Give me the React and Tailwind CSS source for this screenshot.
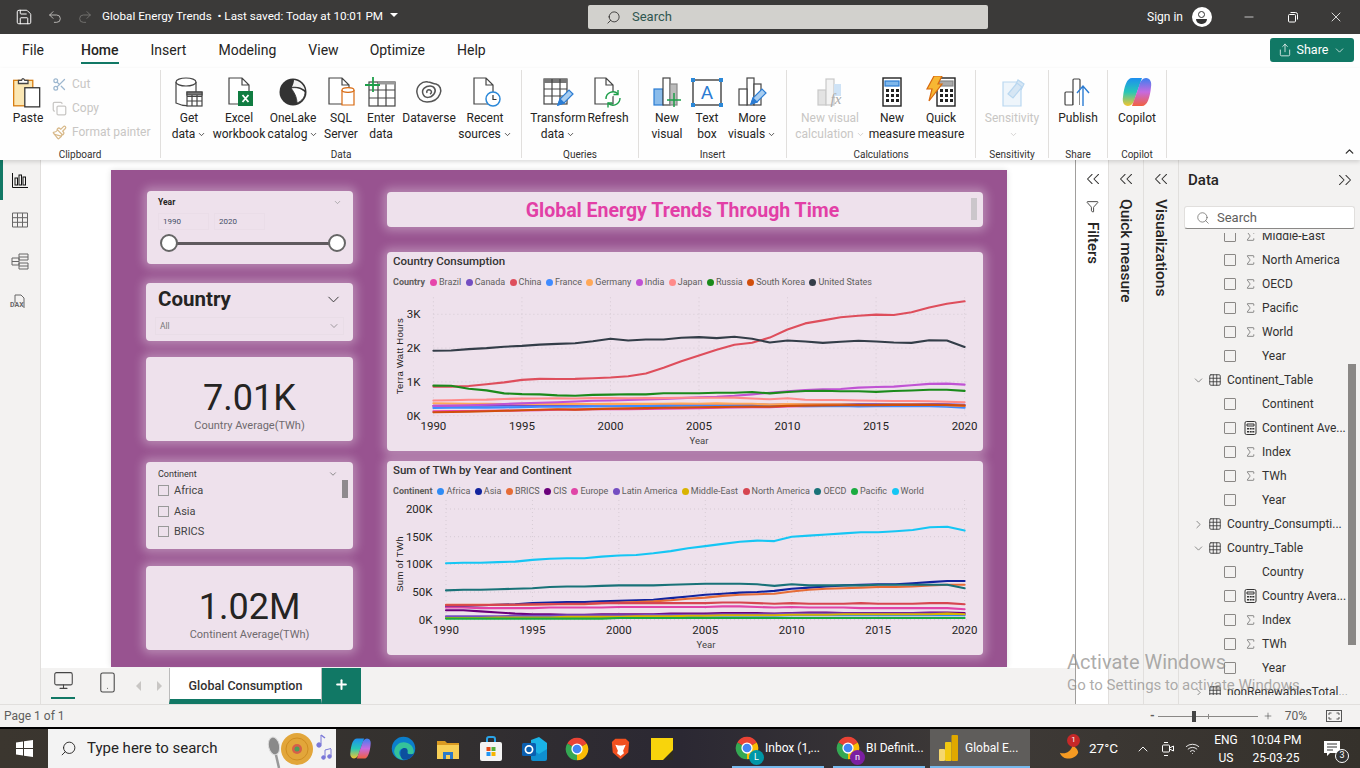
import {
  Save, Undo2, Redo2, Search, Minus, X, ChevronDown, ChevronUp, ChevronRight, ChevronsLeft, ChevronsRight,
  Scissors, Copy, Paintbrush, Funnel, Sigma, Grid3x3, Plus, Monitor, Smartphone, Share, Wifi,
} from 'lucide-react'

const YEARS = Array.from({ length: 31 }, (_, i) => 1990 + i)

const COUNTRY_SERIES = [
  { name: 'Brazil', color: '#e645ab', data: [130,135,140,145,150,155,165,175,180,190,195,195,200,210,215,225,235,245,255,255,275,285,290,300,305,300,295,295,300,300,295] },
  { name: 'Canada', color: '#744ec2', data: [290,295,295,300,305,310,315,320,320,325,335,330,335,340,345,345,340,345,340,325,335,340,340,345,345,345,345,345,345,340,320] },
  { name: 'China', color: '#de4e5c', data: [860,860,880,930,985,1060,1090,1085,1090,1110,1130,1170,1250,1420,1610,1780,1950,2100,2160,2310,2550,2730,2820,2910,2960,2990,2980,3060,3200,3310,3385] },
  { name: 'France', color: '#3f8bff', data: [230,240,245,240,245,255,265,265,270,275,280,285,285,290,295,295,295,290,290,285,295,280,285,290,275,280,280,280,280,270,240] },
  { name: 'Germany', color: '#ffa858', data: [370,360,355,350,345,350,355,350,350,345,350,355,350,355,360,355,365,355,355,330,345,335,335,340,325,325,330,330,325,310,290] },
  { name: 'India', color: '#c053d4', data: [290,300,310,325,345,365,385,400,420,440,450,465,480,495,520,540,560,590,630,680,720,760,780,790,830,850,860,900,940,950,920] },
  { name: 'Japan', color: '#ff8a8a', data: [450,460,470,475,495,505,510,515,510,520,525,515,520,520,530,530,530,535,510,485,515,470,465,465,450,440,435,435,425,415,395] },
  { name: 'Russia', color: '#1b8a1b', data: [890,885,800,750,660,640,630,600,590,615,625,635,630,665,665,665,680,680,700,660,700,730,740,725,725,705,730,745,770,770,735] },
  { name: 'South Korea', color: '#d14e0c', data: [100,110,120,130,145,160,175,190,180,195,210,215,225,235,240,250,255,265,270,270,290,300,305,310,315,315,320,320,320,320,300] },
  { name: 'United States', color: '#333d48', data: [1920,1930,1970,2000,2040,2065,2105,2125,2145,2205,2275,2225,2255,2255,2305,2325,2295,2335,2275,2165,2225,2195,2155,2185,2215,2195,2165,2155,2235,2225,2035] },
]

const CONTINENT_SERIES = [
  { name: 'Africa', color: '#2f8bf5', data: [4,4,4,4,4,5,5,5,5,5,5,6,6,6,6,7,7,7,7,7,8,8,8,8,8,8,8,8,8,8,8] },
  { name: 'Asia', color: '#12239e', data: [23,25,26,27,28,30,31,32,32,33,34,35,36,39,42,45,47,49,50,52,56,58,60,62,63,64,64,66,68,70,70] },
  { name: 'BRICS', color: '#e66c37', data: [27,27,27,27,27,27,28,28,28,30,31,32,33,35,38,40,43,45,46,47,51,54,56,57,58,59,59,60,62,63,63] },
  { name: 'CIS', color: '#6b007b', data: [17,17,15,13,11,10,10,9,9,10,10,10,10,11,11,11,12,12,12,11,12,13,13,12,12,12,12,12,13,13,12] },
  { name: 'Europe', color: '#e044a7', data: [22,22,21,21,21,21,22,22,22,22,23,23,23,23,23,23,24,24,23,22,23,22,22,22,21,21,21,21,21,21,19] },
  { name: 'Latin America', color: '#744ec2', data: [6,6,6,6,7,7,7,8,8,8,8,8,9,9,9,9,10,10,10,10,11,11,11,11,11,11,11,11,11,11,10] },
  { name: 'Middle-East', color: '#d9b300', data: [3,3,3,4,4,4,4,5,5,5,5,6,6,6,7,7,8,8,8,8,9,9,9,10,10,10,10,10,10,11,10] },
  { name: 'North America', color: '#d64550', data: [26,26,26,27,27,28,28,29,29,30,30,30,30,30,30,30,31,31,30,29,30,29,29,29,30,29,29,29,30,30,28] },
  { name: 'OECD', color: '#197278', data: [53,54,54,55,56,57,59,60,60,61,62,62,62,63,64,65,65,65,64,61,64,62,62,62,62,63,63,63,63,63,57] },
  { name: 'Pacific', color: '#1aab40', data: [2,2,2,2,2,2,2,2,2,2,3,3,3,3,3,3,3,3,3,3,3,3,3,3,3,3,3,3,3,3,3] },
  { name: 'World', color: '#15c6f4', data: [102,103,103,104,105,108,110,111,111,114,116,117,120,124,129,133,137,141,143,142,150,152,154,156,158,158,160,162,167,168,161] },
]

const TREE = [
  { t: 'f', icon: 'sum', label: 'Middle-East' },
  { t: 'f', icon: 'sum', label: 'North America' },
  { t: 'f', icon: 'sum', label: 'OECD' },
  { t: 'f', icon: 'sum', label: 'Pacific' },
  { t: 'f', icon: 'sum', label: 'World' },
  { t: 'f', label: 'Year' },
  { t: 'h', open: true, label: 'Continent_Table' },
  { t: 'f', label: 'Continent' },
  { t: 'f', icon: 'calc', label: 'Continent Ave...' },
  { t: 'f', icon: 'sum', label: 'Index' },
  { t: 'f', icon: 'sum', label: 'TWh' },
  { t: 'f', label: 'Year' },
  { t: 'h', label: 'Country_Consumpti...' },
  { t: 'h', open: true, label: 'Country_Table' },
  { t: 'f', label: 'Country' },
  { t: 'f', icon: 'calc', label: 'Country Avera...' },
  { t: 'f', icon: 'sum', label: 'Index' },
  { t: 'f', icon: 'sum', label: 'TWh' },
  { t: 'f', label: 'Year' },
  { t: 'h', label: 'nonRenewablesTotal...' },
]

const Ic = ({ children, s = 32, vb = 32 }) => (
  <svg width={s} height={s} viewBox={`0 0 ${vb} ${vb}`} fill="none" strokeWidth="1.2" stroke="#444">{children}</svg>
)

const Doc = ({ x = 6, y = 2, w = 18, h = 26 }) => (
  <path d={`M${x} ${y}h${w - 7}l7 7v${h - 7}h${-w}z M${x + w - 7} ${y}v7h7`} fill="#fff" />
)

const PasteIcon = () => (
  <Ic s={34}>
    <rect x="2.5" y="5" width="18" height="24" fill="#fbe7b4" stroke="#d77c10" />
    <path d="M7 5h3q1-3 3 0h3v3H7z" fill="#fff" />
    <rect x="13" y="12" width="14" height="18" fill="#fff" stroke="#333" />
  </Ic>
)
const GetDataIcon = () => (
  <Ic>
    <path d="M3 6v21q9 4 14 2M23 6v11" fill="#fff" />
    <ellipse cx="13" cy="6" rx="10" ry="4" fill="#fff" />
    <rect x="14" y="16" width="15" height="14" fill="#fff" />
    <path d="M14 20.5h15M14 25h15M19 16v14M24 16v14" />
    <path d="M14 16h15v3H14z" fill="#777" />
  </Ic>
)
const ExcelIcon = () => (
  <Ic>
    <Doc x={6} y={2} w={20} h={26} />
    <rect x="15" y="15" width="15" height="15" fill="#107c41" stroke="none" />
    <path d="M19.5 19l6 7M25.5 19l-6 7" stroke="#fff" strokeWidth="1.8" />
  </Ic>
)
const OneLakeIcon = () => (
  <Ic>
    <circle cx="16" cy="16" r="13.5" fill="#333" stroke="none" />
    <path d="M17 4c6 1 10 5 11 10-4-3-9-4-13-3 1-2 2-5 2-7z" fill="#f3f3f3" stroke="none" />
    <path d="M14 12c5-1 10 0 14 4 0 5-3 9-8 11 0-6-3-11-6-15z" fill="#fff" stroke="#333" strokeWidth="0.8" />
  </Ic>
)
const SqlIcon = () => (
  <Ic>
    <Doc x={4} y={2} w={20} h={26} />
    <path d="M17 14v15h12V14" fill="#fff" stroke="#d8690f" />
    <ellipse cx="23" cy="14" rx="6" ry="2.3" fill="#fff" stroke="#d8690f" />
  </Ic>
)
const EnterIcon = () => (
  <Ic>
    <rect x="4" y="6" width="26" height="24" fill="#fff" />
    <path d="M4 14h26M4 22h26M13 6v24M21 6v24" />
    <rect x="13" y="5" width="17" height="3.5" fill="#999" stroke="none" />
    <path d="M0 9h15M8 1v15" stroke="#1e9e4a" strokeWidth="1.8" />
  </Ic>
)
const DataverseIcon = () => (
  <Ic>
    <path d="M4 17c-1-7 5-12 11-11 3 0 5 2 8 2 4 1 6 6 4 10-2 5-7 8-13 8-5 0-9-3-10-9z" strokeWidth="1.5" stroke="#555" />
    <path d="M10 18c-2-5 3-8 7-8s7 4 4 8-9 5-11 0z" strokeWidth="1.5" stroke="#555" />
    <path d="M14 17c-1-2 1-4 3-3s2 3 0 4" strokeWidth="1.5" stroke="#555" />
  </Ic>
)
const RecentIcon = () => (
  <Ic>
    <Doc x={5} y={2} w={19} h={26} />
    <circle cx="24" cy="23" r="7" fill="#fff" stroke="#2b88d8" strokeWidth="1.5" />
    <path d="M24 19v4.5h3.5" stroke="#333" />
  </Ic>
)
const Pencil = ({ x = 0, y = 0 }) => (
  <g transform={`translate(${x} ${y})`}>
    <path d="M1 16l2-6L12 1l4 4-9 9z" fill="#a8cdf0" stroke="#2b7cd3" />
    <path d="M1 16l2-6 4 4z" fill="#2b7cd3" stroke="#2b7cd3" />
  </g>
)
const TransformIcon = () => (
  <Ic>
    <rect x="2" y="3" width="23" height="25" fill="#fff" />
    <rect x="2" y="3" width="23" height="4" fill="#777" stroke="none" />
    <path d="M2 13h23M2 20h23M10 3v25M18 3v25" />
    <Pencil x={15} y={13} />
  </Ic>
)
const RefreshIcon = () => (
  <Ic>
    <Doc x={3} y={2} w={18} h={26} />
    <g stroke="#1e9e4a" strokeWidth="1.4">
      <path d="M14 23a7 7 0 0 1 12-5" fill="#fff" />
      <path d="M26 14v4.500h-4.500M28 22a7 7 0 0 1-12 5" />
      <path d="M16 31.500V27h4.500" />
    </g>
  </Ic>
)
const Bars = () => (
  <>
    <rect x="11" y="2" width="7" height="27" fill="#fff" />
    <rect x="18" y="8" width="7" height="21" fill="#fff" />
    <rect x="3" y="13" width="8" height="16" fill="#fff" />
  </>
)
const NewVisualIcon = () => (
  <Ic>
    <rect x="3" y="13" width="9" height="16" fill="#8bbcea" stroke="#2b7cd3" />
    <rect x="12" y="2" width="7" height="27" fill="#fff" />
    <rect x="19" y="8" width="7" height="21" fill="#bbb" stroke="#888" />
    <path d="M16 24h14M23 17v14" stroke="#1e9e4a" strokeWidth="1.5" />
  </Ic>
)
const TextBoxIcon = () => (
  <Ic>
    <rect x="2" y="4" width="28" height="25" fill="#fff" stroke="#222" />
    <text x="16" y="23" textAnchor="middle" fontSize="19" fill="#2b7cd3" stroke="none" fontFamily="Roboto, sans-serif">A</text>
    <g fill="#2b88d8" stroke="none">
      <rect x="0" y="2" width="4" height="4" />
      <rect x="28" y="2" width="4" height="4" />
      <rect x="0" y="27" width="4" height="4" />
      <rect x="28" y="27" width="4" height="4" />
    </g>
  </Ic>
)
const MoreVisualsIcon = () => (
  <Ic>
    <Bars />
    <Pencil x={14} y={12} />
  </Ic>
)
const VisualCalcIcon = () => (
  <Ic>
    <rect x="4" y="14" width="8" height="15" fill="#e3e3e3" stroke="#c8c8c8" />
    <rect x="12" y="3" width="8" height="26" fill="#f3f3f3" stroke="#c8c8c8" />
    <rect x="20" y="8" width="7" height="12" fill="#cfe3f6" stroke="none" />
    <text x="22" y="28" textAnchor="middle" fontSize="15" fontStyle="italic" fill="#aaa" stroke="none" fontFamily="'Liberation Serif', serif">fx</text>
  </Ic>
)
const CalcBody = ({ x, accent }) => (
  <>
    <rect x={x} y="2" width="18" height="28" fill="#fff" stroke="#222" strokeWidth="1.4" />
    <rect x={x + 2} y="5" width="14" height="5" fill={accent} stroke={accent === '#aaa' ? '#888' : '#2b7cd3'} />
    <g fill="#222" stroke="none">
      {[13, 18, 23].map((y) => [3, 8, 13].map((dx) => <rect key={y + '-' + dx} x={x + dx} y={y} width="3" height="3" />))}
    </g>
  </>
)
const MeasureIcon = () => <Ic><CalcBody x={7} accent="#7fb7ea" /></Ic>
const QuickMeasureIcon = () => (
  <Ic>
    <CalcBody x={12} accent="#aaa" />
    <path d="M9 0h8l-4 8h4L4 25l3-12H2z" fill="#f7b733" stroke="#d8690f" />
  </Ic>
)
const SensitivityIcon = () => (
  <Ic>
    <path d="M7 6h18v24H7z" fill="#eef5fb" stroke="#b9d7f0" />
    <path d="M12 18l9-11 5 4-9 11z M19 10l3-6 6 4-3 6" fill="#d6e6f4" stroke="#b9d7f0" />
  </Ic>
)
const PublishIcon = () => (
  <Ic>
    <rect x="3" y="16" width="8" height="13" rx="1" fill="#fff" />
    <path d="M11 29V4a1 1 0 0 1 1-1h5a1 1 0 0 1 1 1v25" fill="#fff" />
    <path d="M18 29V12h5v17z" fill="#fff" stroke="none" />
    <path d="M21 30V11M15 17l6-7 6 7" stroke="#2b7cd3" strokeWidth="1.4" />
  </Ic>
)

const CopilotIcon = ({ s = 32, id = 'cp' }) => (
  <svg width={s} height={s} viewBox="0 0 32 32">
    <defs>
      <linearGradient id={id + 'a'} x1="0" y1="0" x2="0" y2="1">
        <stop offset="0" stopColor="#1d8ef0" />
        <stop offset="0.5" stopColor="#27c7b8" />
        <stop offset="1" stopColor="#f5c52c" />
      </linearGradient>
      <linearGradient id={id + 'b'} x1="0" y1="0" x2="0" y2="1">
        <stop offset="0" stopColor="#3b7ff0" />
        <stop offset="0.5" stopColor="#c66ae0" />
        <stop offset="1" stopColor="#f2603f" />
      </linearGradient>
    </defs>
    <path d="M11 2h10l-7 20c-1 5-4 8-7 8-4 0-6-4-5-9C3 10 6 2 11 2z" fill={`url(#${id}a)`} />
    <path d="M21 30H11l7-20c1-5 4-8 7-8 4 0 6 4 5 9-1 11-4 19-9 19z" fill={`url(#${id}b)`} />
  </svg>
)

const ChromeIcon = ({ s = 22, badge, badgeColor }) => (
  <div className="relative" style={{ width: s, height: s }}>
    <svg width={s} height={s} viewBox="0 0 32 32">
      <path d="M16 16L3 8.500A15 15 0 0 1 29 8.500z" fill="#ea4335" />
      <path d="M16 16L3 8.500A15 15 0 0 0 16 31z" fill="#34a853" />
      <path d="M16 16L29 8.500A15 15 0 0 1 16 31z" fill="#fbbc05" />
      <circle cx="16" cy="16" r="7.500" fill="#fff" />
      <circle cx="16" cy="16" r="5.800" fill="#4285f4" />
    </svg>
    {badge && (
      <span className={`absolute -right-[5px] -bottom-[5px] flex h-[15px] w-[15px] items-center justify-center rounded-full text-[9px] leading-none text-white ${badgeColor}`}>
        {badge}
      </span>
    )}
  </div>
)

const PowerBiIcon = () => (
  <svg width="20" height="26" viewBox="0 0 20 26">
    <rect x="0" y="14" width="6" height="12" rx="1" fill="#f5d76e" />
    <rect x="6" y="7" width="6.500" height="19" rx="1" fill="#f2c811" />
    <rect x="12.500" y="0" width="6.500" height="26" rx="1" fill="#e0a800" />
  </svg>
)

const WinLogo = () => (
  <svg width="17" height="17" viewBox="0 0 17 17" fill="#fff">
    <path d="M0 2.400l7-1v6.700H0zM8 1.200L17 0v8.100H8zM0 9h7v6.600l-7-1zM8 9h9v8l-9-1.300z" />
  </svg>
)

const EdgeIcon = () => (
  <svg width="25" height="25" viewBox="0 0 32 32">
    <circle cx="16" cy="16" r="15" fill="#0b7ecb" />
    <path d="M4 20C5 10 14 6 21 9c6 2 9 8 8 13-2 2-6 2-8 0 1-4-2-7-6-6-5 1-6 7-2 11 1 1 2 2 3 3-7 0-11-4-12-10z" fill="#35c29a" />
    <path d="M12 22c0-6 5-8 8-6 2 2 1 4 1 6 2 2 6 2 8 0-2 6-8 9-13 8-3-1-4-4-4-8z" fill="#0c4f9e" />
  </svg>
)
const FolderIcon = () => (
  <svg width="24" height="22" viewBox="0 0 24 22">
    <path d="M1 3h8l2 2h12v3H1z" fill="#d99a22" />
    <rect x="1" y="7" width="22" height="14" fill="#f7cf56" />
    <path d="M7 21v-7h10v7h-3v-4h-4v4z" fill="#2b79c9" />
  </svg>
)
const StoreIcon = () => (
  <svg width="24" height="26" viewBox="0 0 24 26">
    <path d="M8 6V3a2 2 0 0 1 2-2h4a2 2 0 0 1 2 2v3" fill="none" stroke="#2aa4e8" strokeWidth="2" />
    <rect x="1" y="6" width="22" height="19" rx="2" fill="#f4f4f4" />
    <rect x="7.500" y="11" width="4" height="4" fill="#e64a19" />
    <rect x="12.500" y="11" width="4" height="4" fill="#55b03a" />
    <rect x="7.500" y="16" width="4" height="4" fill="#2196f3" />
    <rect x="12.500" y="16" width="4" height="4" fill="#f7b500" />
  </svg>
)
const OutlookIcon = () => (
  <svg width="25" height="24" viewBox="0 0 25 24">
    <path d="M9 3l8-3 8 6v15l-8 3-8-3z" fill="#1ab3e6" />
    <path d="M9 12l8 5 8-5v10a2 2 0 0 1-2 2H11a2 2 0 0 1-2-2z" fill="#0f8fd0" />
    <rect x="0" y="6" width="14" height="13" rx="1.500" fill="#0a5fb0" />
    <circle cx="7" cy="12.500" r="3.600" fill="none" stroke="#fff" strokeWidth="1.700" />
  </svg>
)
const BraveIcon = () => (
  <svg width="19" height="24" viewBox="0 0 22 26">
    <path d="M5 1h12l4 4-1 12-9 8-9-8L1 5z" fill="#f1501f" />
    <path d="M5 8l4 1h4l4-1-3 7 1 3-4 3-4-3 1-3z" fill="#fff" />
  </svg>
)
const StickyIcon = () => (
  <svg width="22" height="22" viewBox="0 0 22 22">
    <rect x="0" y="0" width="22" height="22" fill="#f8d40c" />
    <path d="M22 22V12L12 22z" fill="#2f2c20" />
  </svg>
)
const SearchBadge = () => (
  <svg width="66" height="38" viewBox="0 0 66 38" className="mr-[3px]">
    <ellipse cx="7" cy="16" rx="5.500" ry="9" fill="#8a8a8a" stroke="#ddd" transform="rotate(-12 7 16)" />
    <path d="M9 25l3 13" stroke="#999" strokeWidth="2.500" />
    <circle cx="30" cy="19" r="16" fill="#e2a63a" />
    <circle cx="30" cy="19" r="11" fill="none" stroke="#cf8d22" />
    <circle cx="30" cy="19" r="5" fill="#d5604a" />
    <circle cx="30" cy="19" r="2.500" fill="#4e9e5a" />
    <g fill="#7a78d8" stroke="#7a78d8">
      <path d="M54 5v9" fill="none" />
      <path d="M54 5l4 3" fill="none" strokeWidth="1.500" />
      <circle cx="52" cy="15" r="2.200" />
      <path d="M58 20v7M64 19v7M58 20l6-1.500" fill="none" />
      <circle cx="56.500" cy="27.500" r="1.800" />
      <circle cx="62.500" cy="26.500" r="1.800" />
    </g>
  </svg>
)

function RibbonBtn({ w, icon, lines, caret, disabled }) {
  return (
    <div className="flex shrink-0 flex-col items-center" style={{ width: w }}>
      <div className="flex h-[34px] items-center justify-center">{icon}</div>
      <div className={`mt-[1px] whitespace-nowrap text-center text-[12px] leading-4 ${disabled ? 'text-[#c8c6c4]' : 'text-[#252423]'}`}>
        {lines.map((l, i) => (
          <div key={i} className="flex h-4 items-center justify-center">
            {l}
            {caret && i === lines.length - 1 && <ChevronDown size={9} strokeWidth={2} className="ml-[2px]" />}
          </div>
        ))}
      </div>
    </div>
  )
}

function Group({ w, label, pl = 0, children }) {
  return (
    <div className="my-[2px] flex shrink-0 flex-col border-r border-[#e1dfdd]" style={{ width: w }}>
      <div className="flex h-[78px] shrink-0 pt-[5px]" style={{ paddingLeft: pl }}>{children}</div>
      <div className="h-[10px] text-center text-[10px] leading-[13px] text-[#323130]">{label}</div>
    </div>
  )
}

function Ribbon() {
  return (
    <div className="relative z-10 flex h-[92px] bg-[#fefefe] shadow-[0_2px_4px_rgba(0,0,0,0.14)]">
      <Group w={161} label="Clipboard" pl={5}>
        <RibbonBtn w={46} icon={<PasteIcon />} lines={['Paste']} />
        <div className="ml-[1px] flex flex-col gap-[8px] pt-[1px] text-[12px] leading-4 text-[#c8c6c4]">
          <div className="flex items-center gap-[5px]"><Scissors size={15} className="text-[#9db7cf]" /><span>Cut</span></div>
          <div className="flex items-center gap-[5px]"><Copy size={15} className="text-[#c8c6c4]" /><span>Copy</span></div>
          <div className="flex items-center gap-[5px]"><Paintbrush size={15} className="text-[#d8b98a]" /><span>Format painter</span></div>
        </div>
      </Group>
      <Group w={361} label="Data" pl={4}>
        <RibbonBtn w={48} icon={<GetDataIcon />} lines={['Get', 'data']} caret />
        <RibbonBtn w={52} icon={<ExcelIcon />} lines={['Excel', 'workbook']} />
        <RibbonBtn w={56} icon={<OneLakeIcon />} lines={['OneLake', 'catalog']} caret />
        <RibbonBtn w={40} icon={<SqlIcon />} lines={['SQL', 'Server']} />
        <RibbonBtn w={40} icon={<EnterIcon />} lines={['Enter', 'data']} />
        <RibbonBtn w={56} icon={<DataverseIcon />} lines={['Dataverse']} />
        <RibbonBtn w={56} icon={<RecentIcon />} lines={['Recent', 'sources']} caret />
      </Group>
      <Group w={117} label="Queries" pl={12}>
        <RibbonBtn w={48} icon={<TransformIcon />} lines={['Transform', 'data']} caret />
        <RibbonBtn w={52} icon={<RefreshIcon />} lines={['Refresh']} />
      </Group>
      <Group w={148} label="Insert" pl={8}>
        <RibbonBtn w={40} icon={<NewVisualIcon />} lines={['New', 'visual']} />
        <RibbonBtn w={40} icon={<TextBoxIcon />} lines={['Text', 'box']} />
        <RibbonBtn w={50} icon={<MoreVisualsIcon />} lines={['More', 'visuals']} caret />
      </Group>
      <Group w={189} label="Calculations" pl={9}>
        <RibbonBtn w={68} icon={<VisualCalcIcon />} lines={['New visual', 'calculation']} caret disabled />
        <RibbonBtn w={56} icon={<MeasureIcon />} lines={['New', 'measure']} />
        <RibbonBtn w={42} icon={<QuickMeasureIcon />} lines={['Quick', 'measure']} />
      </Group>
      <Group w={73} label="Sensitivity">
        <RibbonBtn w={72} icon={<SensitivityIcon />} lines={['Sensitivity', '']} caret disabled />
      </Group>
      <Group w={59} label="Share">
        <RibbonBtn w={58} icon={<PublishIcon />} lines={['Publish']} />
      </Group>
      <Group w={59} label="Copilot">
        <RibbonBtn w={58} icon={<CopilotIcon />} lines={['Copilot']} />
      </Group>
      <ChevronUp size={13} strokeWidth={2.5} className="absolute bottom-[2px] right-[4px] text-[#323130]" />
    </div>
  )
}

function LineChart({ height, series, xStart, zeroY, unit, ticks, tickLabels, yTitle, yTitleY, labelX, xTitleX }) {
  const xEnd = 577.6
  const top = zeroY - ticks[ticks.length - 1] * unit - 17
  const px = (i) => xStart + (i * (xEnd - xStart)) / 30
  return (
    <svg width="596" height={height} viewBox={`0 0 596 ${height}`} className="block" fontFamily="Roboto, sans-serif">
      {ticks.map((t) => (
        <line key={t} x1={xStart} x2={582} y1={zeroY - t * unit} y2={zeroY - t * unit} stroke="#d6cbd4" strokeDasharray="1 3" />
      ))}
      {YEARS.filter((y) => y % 5 === 0).map((y) => (
        <line key={y} x1={px(y - 1990)} x2={px(y - 1990)} y1={top} y2={zeroY} stroke="#d6cbd4" strokeDasharray="1 3" />
      ))}
      {series.map((s) => (
        <polyline
          key={s.name}
          fill="none"
          stroke={s.color}
          strokeWidth="2.100"
          strokeLinejoin="round"
          strokeLinecap="round"
          points={s.data.map((v, i) => `${px(i).toFixed(1)},${(zeroY - v * unit).toFixed(1)}`).join(' ')}
        />
      ))}
      {ticks.map((t, i) => (
        <text key={t} x={labelX} y={zeroY - t * unit + 4} textAnchor="end" fontSize="11.500" fill="#252423">{tickLabels[i]}</text>
      ))}
      {YEARS.filter((y) => y % 5 === 0).map((y) => (
        <text key={y} x={px(y - 1990)} y={zeroY + 14} textAnchor="middle" fontSize="11.500" fill="#252423">{y}</text>
      ))}
      <text x={xTitleX} y={zeroY + 28} textAnchor="middle" fontSize="9.500" fill="#444">Year</text>
      <text transform={`translate(16 ${yTitleY}) rotate(-90)`} textAnchor="middle" fontSize="9.500" fill="#252423" fontFamily="'Liberation Sans', sans-serif" letterSpacing="0.3">{yTitle}</text>
    </svg>
  )
}

function Legend({ title, series, gap }) {
  return (
    <div className="flex items-center whitespace-nowrap text-[9px] leading-3 text-[#605e5c]">
      <span className="mr-[5px] font-bold">{title}</span>
      {series.map((s) => (
        <span key={s.name} className="flex items-center" style={{ marginRight: gap }}>
          <span className="mr-[2px] inline-block h-[7px] w-[7px] rounded-full" style={{ background: s.color }} />
          {s.name}
        </span>
      ))}
    </div>
  )
}

const cardClass = 'rounded-[4px] bg-[#eee1ec] shadow-[0_0_10px_4px_rgba(255,255,255,0.3)]'

function Kpi({ value, label }) {
  return (
    <div className={`${cardClass} flex h-[84px] flex-col items-center pt-[21px]`}>
      <div className="text-[36px] font-normal leading-[40px] text-[#252423]">{value}</div>
      <div className="mt-[1px] text-[11px] leading-[14px] text-[#6f6a6e]">{label}</div>
    </div>
  )
}

function Report() {
  return (
    <div className="flex h-[497px] w-[896px] gap-[34px] bg-[#985390] pl-[35px] pt-[21px] shadow-[0_0_6px_rgba(0,0,0,0.12)]">
      <div className="w-[207px] shrink-0">
        <div className={`${cardClass} relative ml-px h-[73px] px-[11px] pt-[5px]`}>
          <div className="flex items-center justify-between">
            <span className="text-[8.500px] font-bold leading-3 text-[#252423]">Year</span>
            <ChevronDown size={9} className="text-[#999]" />
          </div>
          <div className="mt-[5px] flex gap-[5px] text-[8px] leading-[16px] text-[#444f66]">
            <span className="h-[17px] w-[51px] border border-[#eadde8] pl-[4px]">1990</span>
            <span className="h-[17px] w-[51px] border border-[#eadde8] pl-[4px]">2020</span>
          </div>
          <div className="-mr-[4px] ml-[2px] mt-[4px] flex items-center">
            <span className="z-10 h-[18px] w-[18px] shrink-0 rounded-full border-2 border-[#666] bg-white" />
            <span className="-mx-px h-[3px] flex-1 bg-[#5f5a5e]" />
            <span className="z-10 h-[18px] w-[18px] shrink-0 rounded-full border-2 border-[#666] bg-white" />
          </div>
        </div>
        <div className={`${cardClass} mt-[19px] h-[58px] px-[9px] pt-[3px]`}>
          <div className="flex items-center justify-between pl-[3px]">
            <span className="text-[20.500px] font-bold leading-[26px] text-[#252423]">Country</span>
            <ChevronDown size={19} strokeWidth={1.2} className="mr-[1px] text-[#333]" />
          </div>
          <div className="mt-[5px] flex h-[18px] items-center justify-between border border-[#e9dde7] pl-[4px] pr-[3px] text-[8.500px] text-[#777]">
            <span>All</span>
            <ChevronDown size={12} strokeWidth={1.2} className="text-[#666]" />
          </div>
        </div>
        <div className="mt-[16px]"><Kpi value="7.01K" label="Country Average(TWh)" /></div>
        <div className={`${cardClass} relative mt-[21px] h-[87px] px-[12px] pt-[6px]`}>
          <div className="flex items-center justify-between">
            <span className="text-[9px] leading-3 text-[#333]">Continent</span>
            <ChevronDown size={10} className="mr-[3px] text-[#777]" />
          </div>
          <div className="mt-[4px] flex flex-col gap-[7.500px] text-[11px] leading-[13px] text-[#444]">
            {['Africa', 'Asia', 'BRICS'].map((c) => (
              <div key={c} className="flex items-center gap-[5px]">
                <span className="h-[11px] w-[11px] border border-[#999]" />
                {c}
              </div>
            ))}
          </div>
          <span className="absolute right-[5px] top-[18px] h-[18px] w-[6px] bg-[#8f8a8e]" />
        </div>
        <div className="mt-[17px]"><Kpi value="1.02M" label="Continent Average(TWh)" /></div>
      </div>
      <div className="w-[596px] shrink-0 pt-px">
        <div className={`${cardClass} relative flex h-[35px] items-center justify-center pr-[5px] pt-[2px]`}>
          <span className="text-[19.500px] font-bold text-[#e23fa6]">Global Energy Trends Through Time</span>
          <span className="absolute right-[6px] top-[6px] h-[22px] w-[6px] bg-[#cbc6cb]" />
        </div>
        <div className={`${cardClass} mt-[25px] h-[199px] overflow-hidden`}>
          <div className="h-[38px] px-[6px] pt-[2px]">
            <div className="text-[11.500px] font-medium leading-[14px] text-[#333]">Country Consumption</div>
            <div className="mt-[8px]"><Legend title="Country" series={COUNTRY_SERIES} gap={4.400} /></div>
          </div>
          <LineChart
            height={161}
            series={COUNTRY_SERIES}
            xStart={46.400}
            zeroY={125.700}
            unit={0.0338}
            ticks={[0, 1000, 2000, 3000]}
            tickLabels={['0K', '1K', '2K', '3K']}
            yTitle="Terra Watt Hours"
            yTitleY={66}
            labelX={33.500}
            xTitleX={312}
          />
        </div>
        <div className={`${cardClass} mt-[10px] h-[194px] overflow-hidden`}>
          <div className="h-[39px] px-[6px] pt-[2px]">
            <div className="text-[11.500px] font-medium leading-[14px] text-[#333]">Sum of TWh by Year and Continent</div>
            <div className="mt-[8px]"><Legend title="Continent" series={CONTINENT_SERIES} gap={4.500} /></div>
          </div>
          <LineChart
            height={155}
            series={CONTINENT_SERIES}
            xStart={59}
            zeroY={119.700}
            unit={0.5534}
            ticks={[0, 50, 100, 150, 200]}
            tickLabels={['0K', '50K', '100K', '150K', '200K']}
            yTitle="Sum of TWh"
            yTitleY={64}
            labelX={45.500}
            xTitleX={319}
          />
        </div>
      </div>
    </div>
  )
}

function VerticalPane({ w, bg, label, top, icon, textSize }) {
  return (
    <div className={`flex shrink-0 flex-col items-center border-r border-[#e1dfdd] pt-[8px] ${bg}`} style={{ width: w }}>
      <ChevronsLeft size={22} strokeWidth={1.1} className="text-[#323130]" />
      <div className="flex flex-col items-center" style={{ marginTop: top }}>
        {icon}
        <span className={`font-medium leading-5 text-[#252423] [writing-mode:vertical-rl] ${textSize}`}>{label}</span>
      </div>
    </div>
  )
}

function CalcGlyph() {
  return (
    <svg width="13" height="14" viewBox="0 0 13 14" fill="none" stroke="#333">
      <rect x="1" y="0.500" width="11" height="13" rx="1.500" />
      <path d="M3 3h7v2H3z" />
      <g fill="#333" stroke="none">
        <rect x="3" y="7" width="2" height="1.500" /><rect x="5.700" y="7" width="2" height="1.500" /><rect x="8.300" y="7" width="2" height="1.500" />
        <rect x="3" y="10" width="2" height="1.500" /><rect x="5.700" y="10" width="2" height="1.500" /><rect x="8.300" y="10" width="2" height="1.500" />
      </g>
    </svg>
  )
}

function TreeRow({ row }) {
  if (row.t === 'h') {
    return (
      <div className="flex h-6 items-center whitespace-nowrap pl-[13px] text-[12px] text-[#323130]">
        {row.open
          ? <ChevronDown size={13} strokeWidth={1.2} className="text-[#555]" />
          : <ChevronRight size={13} strokeWidth={1.2} className="text-[#555]" />}
        <Grid3x3 size={14} strokeWidth={1.4} className="ml-[3px] text-[#333]" />
        <span className="ml-[5px]">{row.label}</span>
      </div>
    )
  }
  return (
    <div className="flex h-6 items-center whitespace-nowrap pl-[45px] text-[12px] text-[#323130]">
      <span className="h-[12px] w-[12px] shrink-0 rounded-[1px] border border-[#8a8886] bg-[#f3f2f1]" />
      <span className="ml-[8px] flex w-[13px] shrink-0 justify-center">
        {row.icon === 'sum' && <Sigma size={18} strokeWidth={1} className="-my-[2px] text-[#333]" />}
        {row.icon === 'calc' && <CalcGlyph />}
      </span>
      <span className="ml-[5px]">{row.label}</span>
    </div>
  )
}

function DataPane() {
  return (
    <div className="flex w-[181px] shrink-0 flex-col bg-[#f3f2f1]">
      <div className="flex h-[38px] items-center justify-between pl-[9px] pr-[4px] pt-[2px]">
        <span className="text-[15px] font-medium text-[#252423]">Data</span>
        <ChevronsRight size={22} strokeWidth={1.1} className="text-[#323130]" />
      </div>
      <div className="mx-[5px] mt-[8px] flex h-[23px] items-center rounded-[3px] border border-[#e1dfdd] border-b-[#8a8886] bg-white pl-[11px] text-[13px] text-[#605e5c]">
        <Search size={14} strokeWidth={1.2} className="mr-[7px]" />
        Search
      </div>
      <div className="relative mt-[4px] h-[462px] overflow-hidden">
        <div className="-mt-[9px]">
          {TREE.map((r, i) => <TreeRow key={i} row={r} />)}
        </div>
        <span className="absolute right-[4px] top-[131px] h-[281px] w-[8px] bg-[#8a8886]" />
      </div>
    </div>
  )
}

function Taskbar() {
  return (
    <div className="flex h-[41px] items-center border-t-2 border-black bg-[linear-gradient(90deg,#3b362f,#34312f_30%,#2b2833_50%,#3e3a37_72%,#35312b)] text-white">
      <div className="flex w-[48px] shrink-0 justify-center"><WinLogo /></div>
      <div className="flex h-[39px] w-[288px] shrink-0 items-center justify-between bg-[#f3f3f3] pl-[12px] text-[#252423]">
        <div className="flex items-center gap-[10px] text-[15px]">
          <Search size={17} strokeWidth={1.3} className="-scale-x-100" />
          Type here to search
        </div>
        <SearchBadge />
      </div>
      <div className="flex shrink-0 items-center">
        <div className="ml-[11px] flex w-[26px] justify-center"><CopilotIcon s={23} id="tb" /></div>
        <div className="ml-[18px] flex w-[25px] justify-center"><EdgeIcon /></div>
        <div className="ml-[20px] flex w-[24px] justify-center"><FolderIcon /></div>
        <div className="ml-[19px] flex w-[24px] justify-center"><StoreIcon /></div>
        <div className="ml-[19px] flex w-[25px] justify-center"><OutlookIcon /></div>
        <div className="ml-[18px] flex w-[24px] justify-center"><ChromeIcon s={24} /></div>
        <div className="ml-[20px] flex w-[22px] justify-center"><BraveIcon /></div>
        <div className="ml-[20px] flex w-[22px] justify-center"><StickyIcon /></div>
      </div>
      <div className="ml-[59px] flex h-[39px] w-[92px] shrink-0 items-center border-b-2 border-[#76b9ed] pl-[3px] pt-[1px] text-[12px]">
        <ChromeIcon s={24} badge="L" badgeColor="bg-[#0097a7]" />
        <span className="ml-[6px] whitespace-nowrap">Inbox (1,...</span>
      </div>
      <div className="ml-[9px] flex h-[39px] w-[92px] shrink-0 items-center border-b-2 border-[#76b9ed] pl-[3px] pt-[1px] text-[12px]">
        <ChromeIcon s={24} badge="n" badgeColor="bg-[#7b1fa2]" />
        <span className="ml-[6px] whitespace-nowrap">BI Definit...</span>
      </div>
      <div className="ml-[5px] flex h-[39px] w-[100px] shrink-0 items-center border-b-2 border-[#76b9ed] bg-[#5f5d5b] pl-[9px] text-[12px]">
        <PowerBiIcon />
        <span className="ml-[6px] whitespace-nowrap">Global E...</span>
      </div>
      <div className="relative ml-[28px] flex w-[22px] justify-center">
        <svg width="24" height="26" viewBox="0 0 24 26">
          <path d="M2 17c5 2 12 0 14-8 3 2 6 5 6 8-3 7-16 10-20 0z" fill="#f59a22" />
        </svg>
        <span className="absolute -top-[2px] right-0 flex h-[13px] w-[13px] items-center justify-center rounded-full bg-[#c62828] text-[8px]">1</span>
      </div>
      <span className="ml-[9px] w-[32px] whitespace-nowrap text-[13.500px]">27°C</span>
      <ChevronUp size={16} strokeWidth={1.4} className="ml-[14px]" />
      <svg width="14" height="18" viewBox="0 0 14 18" fill="none" stroke="#fff" className="ml-[10px]">
        <rect x="1.500" y="5" width="7" height="7" rx="1" />
        <path d="M8.500 8l4-2v5l-4-2M3 2.500h4M3 15.500h4" />
      </svg>
      <Wifi size={15} strokeWidth={1.4} className="ml-[10px]" />
      <div className="ml-[14px] flex w-[24px] flex-col items-center text-[12px] leading-[18px]">
        <span>ENG</span>
        <span>US</span>
      </div>
      <div className="ml-[10px] flex w-[56px] flex-col items-center text-[12px] leading-[18px]">
        <span className="whitespace-nowrap">10:04 PM</span>
        <span>25-03-25</span>
      </div>
      <div className="relative ml-[20px]">
        <svg width="16" height="16" viewBox="0 0 16 16" fill="#fff">
          <path d="M0 0h16v12H6l-3 3v-3H0z" />
          <path d="M3 3h10M3 6h10M3 9h6" stroke="#333" />
        </svg>
        <span className="absolute -bottom-[6px] -right-[9px] flex h-[14px] w-[14px] items-center justify-center rounded-full border border-white bg-[#333] text-[9px]">3</span>
      </div>
    </div>
  )
}

export default function App() {
  return (
    <div className="relative flex h-[768px] w-[1360px] flex-col overflow-hidden bg-white font-[Roboto,'Noto_Sans',sans-serif] text-[#252423]">
      {/* title bar */}
      <div className="flex h-[34px] shrink-0 items-center bg-[#3b3a39] text-white">
        <Save size={18} strokeWidth={1.3} className="ml-[15px]" />
        <Undo2 size={16} strokeWidth={1.3} className="ml-[14px] text-[#c8c6c4]" />
        <Redo2 size={16} strokeWidth={1.3} className="ml-[14px] text-[#797775]" />
        <span className="ml-[9px] w-[288px] whitespace-nowrap text-[11.700px]">Global Energy Trends &nbsp;•&nbsp;Last saved: Today at 10:01 PM</span>
        <span className="h-0 w-0 -translate-y-[2px] border-x-[4px] border-t-[4px] border-x-transparent border-t-white" />
        <div className="ml-[190px] flex h-6 w-[400px] items-center rounded-[2px] bg-[#d2d1cd] pl-[18px] text-[13px] text-[#2f5750]">
          <Search size={15} strokeWidth={1.3} className="mr-[11px] -scale-x-100 text-[#252423]" />
          Search
        </div>
        <span className="ml-[159px] text-[12px]">Sign in</span>
        <span className="ml-[9px] flex h-5 w-5 flex-col items-center justify-center rounded-full bg-white">
          <span className="h-[7px] w-[7px] rounded-full border border-[#333]" />
          <span className="mt-px h-[5px] w-[11px] rounded-b-full bg-[#333]" />
        </span>
        <Minus size={14} strokeWidth={1.2} className="ml-[30px]" />
        <svg width="12" height="12" viewBox="0 0 12 12" fill="none" stroke="#fff" className="ml-[31px]">
          <rect x="1.500" y="3.500" width="7" height="7.500" rx="1" />
          <path d="M3.500 1.500h5a2 2 0 0 1 2 2v5" />
        </svg>
        <X size={16} strokeWidth={1.2} className="ml-[29px]" />
      </div>

      {/* menu tabs */}
      <div className="flex h-[34px] shrink-0 items-center bg-[#fefefe] pb-[2px] text-[14px]">
        <span className="ml-[22px]">File</span>
        <span className="relative ml-[37px] font-medium">
          Home
          <span className="absolute -bottom-[3px] left-0 right-0 h-[2px] bg-[#117865]" />
        </span>
        <span className="ml-[32px]">Insert</span>
        <span className="ml-[32px]">Modeling</span>
        <span className="ml-[32px]">View</span>
        <span className="ml-[31px]">Optimize</span>
        <span className="ml-[32px]">Help</span>
        <div className="ml-auto mr-[6px] flex h-6 w-[84px] items-center justify-center gap-[5px] rounded-[3px] bg-[#117865] text-[12.500px] text-white">
          <Share size={14} strokeWidth={1.3} />
          Share
          <ChevronDown size={13} strokeWidth={1.3} />
        </div>
      </div>

      <Ribbon />

      {/* body */}
      <div className="flex h-[544px] shrink-0">
        <div className="relative flex w-[41px] shrink-0 flex-col items-center gap-[24px] border-r border-[#e1dfdd] bg-[#f3f2f1] pt-[12px]">
          <span className="absolute left-0 top-0 h-[40px] w-[3px] bg-[#117865]" />
          <svg width="16" height="16" viewBox="0 0 16 16" fill="none" stroke="#111">
            <path d="M.5 1v14.500H16" />
            <rect x="3" y="6" width="2.500" height="7" />
            <rect x="7" y="3" width="2.500" height="10" />
            <rect x="11" y="5" width="2.500" height="8" />
          </svg>
          <svg width="16" height="16" viewBox="0 0 16 16" fill="none" stroke="#666">
            <path d="M.5 1h15v14h-15zM.5 5.700h15M.5 10.300h15M5.500 1v14M10.500 1v14" />
          </svg>
          <svg width="18" height="18" viewBox="0 0 18 18" fill="none" stroke="#666">
            <path d="M1 6h7v7H1zM1 9.500h7M8 2h9v6H8zM8 5h9M8 11h9v6H8zM8 14h9" />
          </svg>
          <div className="relative h-4 w-4">
            <svg width="16" height="16" viewBox="0 0 16 16" fill="none" stroke="#666">
              <path d="M3 9V1h6l3 3v10" />
            </svg>
            <span className="absolute -left-[2px] top-[7px] text-[7px] font-bold leading-[9px] text-[#666]">DAX</span>
          </div>
        </div>
        <div className="flex w-[1035px] shrink-0 flex-col border-r border-[#a19f9d]">
          <div className="h-[508px] overflow-hidden bg-white pl-[70px] pt-[10px]">
            <Report />
          </div>
          <div className="flex h-[36px] items-stretch bg-[#f3f2f1]">
            <div className="relative flex w-[44px] items-center justify-center pb-[12px] pl-[1px]">
              <Monitor size={21} strokeWidth={1.2} className="text-[#444]" />
              <span className="absolute bottom-[5px] left-[10px] h-[2px] w-[24px] bg-[#117865]" />
            </div>
            <div className="flex w-[44px] items-center justify-center pb-[8px]">
              <Smartphone size={23} strokeWidth={1.1} className="text-[#444]" />
            </div>
            <div className="flex w-[40px] items-center justify-center gap-[16px] pb-[1px]">
              <span className="h-0 w-0 border-y-[5px] border-r-[5px] border-y-transparent border-r-[#c8c6c4]" />
              <span className="h-0 w-0 border-y-[5px] border-l-[5px] border-y-transparent border-l-[#c8c6c4]" />
            </div>
            <div className="flex w-[153px] items-center justify-center border-x border-[#bbb] border-b-[5px] border-b-[#117865] bg-white pt-[6px] text-[12.500px] font-medium text-[#323130]">
              Global Consumption
            </div>
            <div className="flex w-[39px] items-center justify-center bg-[#117865] pb-[3px] text-white">
              <Plus size={15} strokeWidth={3.2} />
            </div>
          </div>
        </div>
        <VerticalPane w={33} bg="bg-white pl-px" label="Filters" top={10} textSize="text-[15px]" icon={<Funnel size={13} strokeWidth={1.5} className="mb-[9px] text-[#252423]" />} />
        <VerticalPane w={35} bg="bg-[#f3f2f1]" label="Quick measure" top={9} textSize="text-[15.500px]" />
        <VerticalPane w={35} bg="bg-[#f3f2f1]" label="Visualizations" top={9} textSize="text-[15.500px]" />
        <DataPane />
      </div>

      {/* status bar */}
      <div className="flex h-[23px] shrink-0 items-center border-t border-[#e1dfdd] bg-[#f3f2f1] pl-[4px] text-[12px] text-[#605e5c]">
        Page 1 of 1
        <div className="ml-auto flex items-center">
          <span className="mr-[3px] font-bold">-</span>
          <div className="relative h-px w-[100px] bg-[#8a8886]">
            <span className="absolute left-[34px] -top-[5px] h-[11px] w-[4px] bg-[#444]" />
            <span className="absolute left-[50px] -top-[2px] h-[5px] w-px bg-[#8a8886]" />
          </div>
          <Plus size={10} strokeWidth={1.4} className="ml-[5px] text-[#444]" />
          <span className="ml-[12px]">70%</span>
          <svg width="16" height="12" viewBox="0 0 16 12" fill="none" stroke="#555" className="ml-[19px] mr-[18px]">
            <rect x="0.500" y="0.500" width="15" height="11" />
            <path d="M3 5V3h2.500M13 5V3h-2.500M3 7v2h2.500M13 7v2h-2.500" />
          </svg>
        </div>
      </div>

      <Taskbar />

      {/* windows watermark over the panes */}
      <div className="pointer-events-none absolute left-[1067px] top-[650px] z-20 whitespace-nowrap text-[#8a8886]/70">
        <div className="text-[20px] leading-6">Activate Windows</div>
        <div className="mt-[2px] text-[15px] leading-[18px]">Go to Settings to activate Windows.</div>
      </div>
    </div>
  )
}
